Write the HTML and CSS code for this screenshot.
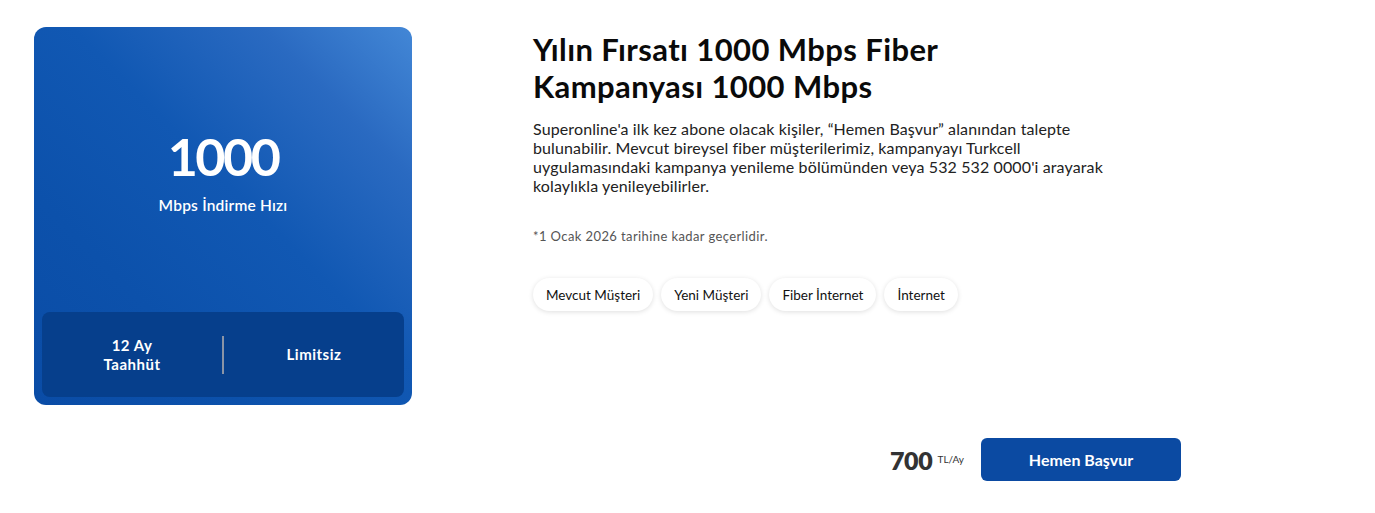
FILE: index.html
```html
<!DOCTYPE html>
<html lang="tr">
<head>
<meta charset="utf-8">
<title>Kampanya</title>
<link rel="stylesheet" href="styles.css">
</head>
<body>
<div class="page">
  <div class="top">
    <div class="card">
      <div class="speed">
        <div class="speed-num">1000</div>
        <div class="speed-label">Mbps İndirme Hızı</div>
      </div>
      <div class="panel">
        <div class="panel-item">12 Ay<br>Taahhüt</div>
        <div class="divider"></div>
        <div class="panel-item">Limitsiz</div>
      </div>
    </div>
    <div class="info">
      <h1 class="title">Yılın Fırsatı 1000 Mbps Fiber<br>Kampanyası 1000 Mbps</h1>
      <p class="desc">Superonline'a ilk kez abone olacak kişiler, “Hemen Başvur” alanından talepte<br>bulunabilir. Mevcut bireysel fiber müşterilerimiz, kampanyayı Turkcell<br>uygulamasındaki kampanya yenileme bölümünden veya 532 532 0000'i arayarak<br>kolaylıkla yenileyebilirler.</p>
      <p class="note">*1 Ocak 2026 tarihine kadar geçerlidir.</p>
      <div class="chips">
        <span class="chip">Mevcut Müşteri</span>
        <span class="chip">Yeni Müşteri</span>
        <span class="chip">Fiber İnternet</span>
        <span class="chip">İnternet</span>
      </div>
    </div>
  </div>
  <div class="bottom">
    <div class="price"><span class="price-num">700</span><span class="price-unit">TL/Ay</span></div>
    <button class="apply">Hemen Başvur</button>
  </div>
</div>
</body>
</html>
```
FILE: styles.css
```css
* { box-sizing: border-box; }
html, body { margin: 0; padding: 0; background: #fff; }
body { font-family: "Lato", "Inter", sans-serif; color: #111; }
.page { width: 1181px; padding: 27px 0 0 34px; }
.top { display: flex; gap: 121px; }
.card {
  width: 378px; height: 378px; flex: none;
  border-radius: 12px;
  background: linear-gradient(225deg, #4387d6 0%, #2a6ac1 20%, #1158b3 45%, #0c51ab 72%, #0a4ca6 100%);
  display: flex; flex-direction: column; padding: 8px;
}
.speed { flex: 1; display: flex; flex-direction: column; align-items: center; padding-top: 91px; color: #fff; }
.speed-num { font-size: 52px; font-weight: 700; line-height: 60px; letter-spacing: -2.5px; }
.speed-label { font-size: 15.5px; font-weight: 600; margin-top: 10px; letter-spacing: 0.2px; }
.panel {
  height: 85px; background: #063f8c; border-radius: 8px;
  display: flex; align-items: center; color: #fff;
}
.panel-item { flex: 1; text-align: center; font-weight: 700; font-size: 15px; line-height: 19px; letter-spacing: 0.5px; }
.divider { width: 2px; height: 38px; background: #8a94a6; flex: none; }
.info { width: 648px; padding-top: 4px; }
.title { margin: 0; font-size: 31px; line-height: 37px; font-weight: 700; color: #0a0a0a; letter-spacing: 0.4px; }
.desc { margin: 14px 0 0; font-size: 16px; line-height: 19px; color: #222; letter-spacing: 0.12px; }
.note { margin: 33px 0 0; font-size: 13px; color: #555; letter-spacing: 0.4px; }
.chips { display: flex; gap: 8px; margin-top: 34px; }
.chip {
  height: 33px; padding: 0 13px; border-radius: 17px; background: #fff;
  box-shadow: 0 1px 5px rgba(0,0,0,0.13);
  display: inline-flex; align-items: center; font-size: 13.5px; color: #111;
}
.bottom { display: flex; justify-content: flex-end; align-items: center; gap: 17px; margin-top: 33px; }
.price { display: flex; align-items: flex-start; gap: 5px; color: #333; }
.price-num { font-size: 25px; font-weight: 800; line-height: 28px; letter-spacing: -0.3px; }
.price-unit { font-size: 10px; margin-top: 7px; }
.apply {
  width: 200px; height: 43px; border: none; border-radius: 6px; background: #0b4aa2;
  color: #fff; font-family: inherit; font-size: 16px; font-weight: 700;
}
```
